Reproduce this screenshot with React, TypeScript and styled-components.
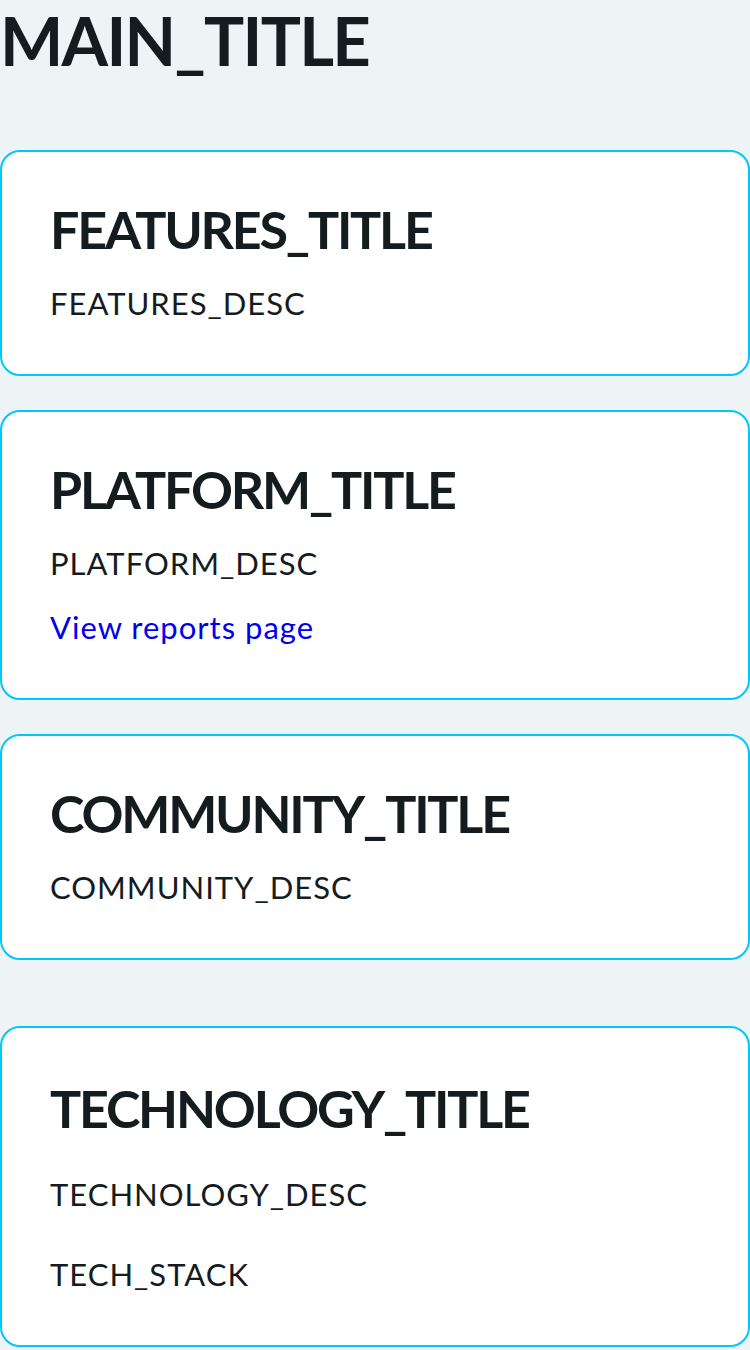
import React from "react";
import styled, { createGlobalStyle } from "styled-components";

const GlobalStyle = createGlobalStyle`
  body {
    margin: 0;
    background: #eef3f6;
    font-family: Lato, "Open Sans", sans-serif;
    color: #151c1f;
  }
`;

const sections = [
  { title: "FEATURES_TITLE", lines: ["FEATURES_DESC"] },
  { title: "PLATFORM_TITLE", lines: ["PLATFORM_DESC"], link: "View reports page" },
  { title: "COMMUNITY_TITLE", lines: ["COMMUNITY_DESC"] },
  { title: "TECHNOLOGY_TITLE", lines: ["TECHNOLOGY_DESC", "TECH_STACK"], wide: true },
];

const App = () => {
  return (
    <Main>
      <GlobalStyle />
      <MainTitle>MAIN_TITLE</MainTitle>
      <List>
        {sections.map((s) => (
          <Card key={s.title} $spaced={s.wide}>
            <Title $spaced={s.wide}>{s.title}</Title>
            {s.lines.map((line, i) => (
              <Text key={line} $gap={s.wide ? (i === 0 ? 37 : 43) : 25}>
                {line}
              </Text>
            ))}
            {s.link && <Link href="#">{s.link}</Link>}
          </Card>
        ))}
      </List>
    </Main>
  );
};

export default App;

const Main = styled.div`
  padding: 0;
`;
const MainTitle = styled.h1`
  margin: 0;
  font-size: 67px;
  font-weight: 700;
  line-height: 80px;
  letter-spacing: -1.7px;
`;
const List = styled.div`
  display: flex;
  flex-direction: column;
  gap: 34px;
  margin-top: 70px;
`;
const Card = styled.section<{ $spaced?: boolean }>`
  background: #fff;
  border: 2px solid #00c8fa;
  border-radius: 20px;
  padding: 0 48px 52px;
  margin-top: ${(p) => (p.$spaced ? "32px" : "0")};
`;
const Title = styled.h2<{ $spaced?: boolean }>`
  margin: ${(p) => (p.$spaced ? "49px" : "46px")} 0 0;
  font-size: 52px;
  font-weight: 700;
  line-height: 62px;
  letter-spacing: -2.2px;
`;
const Text = styled.p<{ $gap: number }>`
  margin: ${(p) => p.$gap}px 0 0;
  font-size: 31px;
  line-height: 37px;
  letter-spacing: 1px;
`;
const Link = styled.a`
  display: block;
  margin-top: 27px;
  font-size: 31px;
  line-height: 37px;
  letter-spacing: 1px;
  color: #0000ee;
  text-decoration: none;
`;
